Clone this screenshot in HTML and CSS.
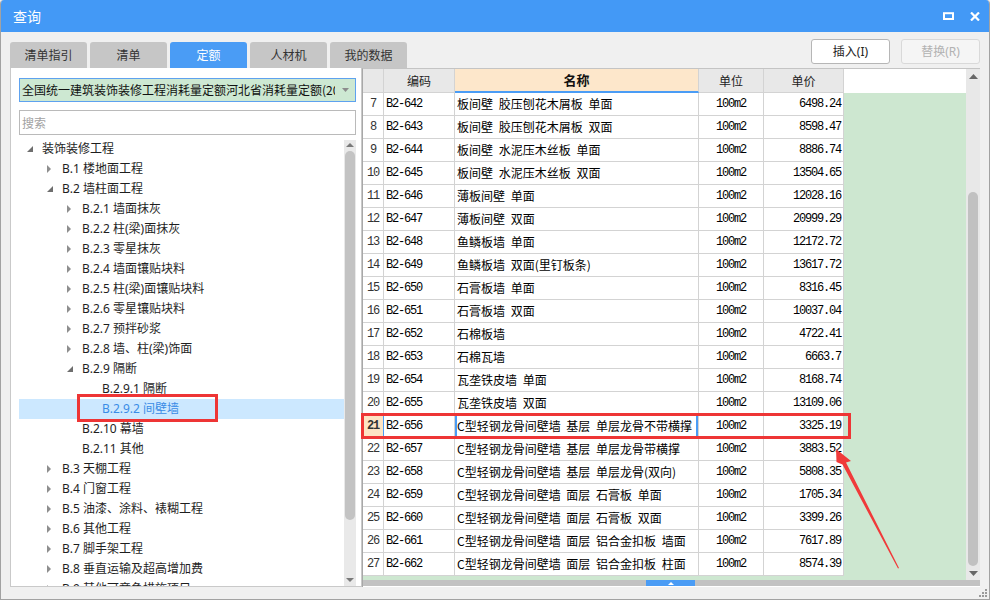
FILE: index.html
```html
<!DOCTYPE html>
<html lang="zh-CN">
<head>
<meta charset="utf-8">
<title>查询</title>
<link rel="stylesheet" href="styles.css">
</head>
<body>
<div class="window">
  <div class="titlebar">
    <span class="title">查询</span>
    <div class="winbtns">
      <svg width="11" height="8" viewBox="0 0 11 8"><rect x="1" y="1.2" width="9" height="5.8" fill="none" stroke="#fff" stroke-width="2"/></svg>
      <svg width="10" height="9" viewBox="0 0 10 9"><path d="M1 0.5 L9 8.5 M9 0.5 L1 8.5" stroke="#fff" stroke-width="2.2"/></svg>
    </div>
  </div>

  <div class="toolbar">
    <div class="tabs">
      <div class="tab">清单指引</div>
      <div class="tab">清单</div>
      <div class="tab active">定额</div>
      <div class="tab">人材机</div>
      <div class="tab">我的数据</div>
    </div>
    <div class="actions">
      <button class="btn">插入(I)</button>
      <button class="btn disabled">替换(R)</button>
    </div>
  </div>

  <div class="main">
    <div class="left">
      <div class="combo">
        <span class="combo-text">全国统一建筑装饰装修工程消耗量定额河北省消耗量定额(2012)</span>
        <span class="combo-arrow"><svg width="7" height="4" viewBox="0 0 7 4"><polygon points="0,0 7,0 3.5,4" fill="#8c8c8c"/></svg></span>
      </div>
      <div class="search">搜索</div>
      <div class="treewrap">
        <div class="tree">
          <div class="node l0"><span class="tg"><svg width="8" height="8" viewBox="0 0 8 8"><polygon points="7,1 7,7 1,7" fill="#6e6e6e"/></svg></span>装饰装修工程</div>
          <div class="node l1"><span class="tg"><svg width="8" height="8" viewBox="0 0 8 8"><polygon points="1,0 5,4 1,8" fill="#8e8e8e"/></svg></span>B.1 楼地面工程</div>
          <div class="node l1"><span class="tg"><svg width="8" height="8" viewBox="0 0 8 8"><polygon points="7,1 7,7 1,7" fill="#6e6e6e"/></svg></span>B.2 墙柱面工程</div>
          <div class="node l2"><span class="tg"><svg width="8" height="8" viewBox="0 0 8 8"><polygon points="1,0 5,4 1,8" fill="#8e8e8e"/></svg></span>B.2.1 墙面抹灰</div>
          <div class="node l2"><span class="tg"><svg width="8" height="8" viewBox="0 0 8 8"><polygon points="1,0 5,4 1,8" fill="#8e8e8e"/></svg></span>B.2.2 柱(梁)面抹灰</div>
          <div class="node l2"><span class="tg"><svg width="8" height="8" viewBox="0 0 8 8"><polygon points="1,0 5,4 1,8" fill="#8e8e8e"/></svg></span>B.2.3 零星抹灰</div>
          <div class="node l2"><span class="tg"><svg width="8" height="8" viewBox="0 0 8 8"><polygon points="1,0 5,4 1,8" fill="#8e8e8e"/></svg></span>B.2.4 墙面镶贴块料</div>
          <div class="node l2"><span class="tg"><svg width="8" height="8" viewBox="0 0 8 8"><polygon points="1,0 5,4 1,8" fill="#8e8e8e"/></svg></span>B.2.5 柱(梁)面镶贴块料</div>
          <div class="node l2"><span class="tg"><svg width="8" height="8" viewBox="0 0 8 8"><polygon points="1,0 5,4 1,8" fill="#8e8e8e"/></svg></span>B.2.6 零星镶贴块料</div>
          <div class="node l2"><span class="tg"><svg width="8" height="8" viewBox="0 0 8 8"><polygon points="1,0 5,4 1,8" fill="#8e8e8e"/></svg></span>B.2.7 预拌砂浆</div>
          <div class="node l2"><span class="tg"><svg width="8" height="8" viewBox="0 0 8 8"><polygon points="1,0 5,4 1,8" fill="#8e8e8e"/></svg></span>B.2.8 墙、柱(梁)饰面</div>
          <div class="node l2"><span class="tg"><svg width="8" height="8" viewBox="0 0 8 8"><polygon points="7,1 7,7 1,7" fill="#6e6e6e"/></svg></span>B.2.9 隔断</div>
          <div class="node l3"><span class="tg"></span>B.2.9.1 隔断</div>
          <div class="node l3 sel"><span class="tg"></span>B.2.9.2 间壁墙</div>
          <div class="node l2"><span class="tg"></span>B.2.10 幕墙</div>
          <div class="node l2"><span class="tg"></span>B.2.11 其他</div>
          <div class="node l1"><span class="tg"><svg width="8" height="8" viewBox="0 0 8 8"><polygon points="1,0 5,4 1,8" fill="#8e8e8e"/></svg></span>B.3 天棚工程</div>
          <div class="node l1"><span class="tg"><svg width="8" height="8" viewBox="0 0 8 8"><polygon points="1,0 5,4 1,8" fill="#8e8e8e"/></svg></span>B.4 门窗工程</div>
          <div class="node l1"><span class="tg"><svg width="8" height="8" viewBox="0 0 8 8"><polygon points="1,0 5,4 1,8" fill="#8e8e8e"/></svg></span>B.5 油漆、涂料、裱糊工程</div>
          <div class="node l1"><span class="tg"><svg width="8" height="8" viewBox="0 0 8 8"><polygon points="1,0 5,4 1,8" fill="#8e8e8e"/></svg></span>B.6 其他工程</div>
          <div class="node l1"><span class="tg"><svg width="8" height="8" viewBox="0 0 8 8"><polygon points="1,0 5,4 1,8" fill="#8e8e8e"/></svg></span>B.7 脚手架工程</div>
          <div class="node l1"><span class="tg"><svg width="8" height="8" viewBox="0 0 8 8"><polygon points="1,0 5,4 1,8" fill="#8e8e8e"/></svg></span>B.8 垂直运输及超高增加费</div>
          <div class="node l1"><span class="tg"><svg width="8" height="8" viewBox="0 0 8 8"><polygon points="1,0 5,4 1,8" fill="#8e8e8e"/></svg></span>B.9 其他可竞争措施项目</div>
        </div>
        <div class="lscroll">
          <div class="sarrow up"><svg width="8" height="4" viewBox="0 0 8 4"><polygon points="0,4 8,4 4,0" fill="#7a7a7a"/></svg></div>
          <div class="lthumb"></div>
          <div class="sfill"></div>
          <div class="sarrow down"><svg width="8" height="4" viewBox="0 0 8 4"><polygon points="0,0 8,0 4,4" fill="#7a7a7a"/></svg></div>
        </div>
      </div>
    </div>

    <div class="right">
      <div class="gridwrap">
        <div class="tablearea">
          <div class="thead">
            <div class="row hdr">
              <div class="c num"></div>
              <div class="c">编码</div>
              <div class="c nameh">名称</div>
              <div class="c">单位</div>
              <div class="c">单价</div>
            </div>
          </div>
          <div class="tbody">
            <div class="row"><div class="c num">7</div><div class="c code">B2-642</div><div class="c name">板间壁 胶压刨花木屑板 单面</div><div class="c unit">100m2</div><div class="c price">6498.24</div></div>
            <div class="row"><div class="c num">8</div><div class="c code">B2-643</div><div class="c name">板间壁 胶压刨花木屑板 双面</div><div class="c unit">100m2</div><div class="c price">8598.47</div></div>
            <div class="row"><div class="c num">9</div><div class="c code">B2-644</div><div class="c name">板间壁 水泥压木丝板 单面</div><div class="c unit">100m2</div><div class="c price">8886.74</div></div>
            <div class="row"><div class="c num">10</div><div class="c code">B2-645</div><div class="c name">板间壁 水泥压木丝板 双面</div><div class="c unit">100m2</div><div class="c price">13504.65</div></div>
            <div class="row"><div class="c num">11</div><div class="c code">B2-646</div><div class="c name">薄板间壁 单面</div><div class="c unit">100m2</div><div class="c price">12028.16</div></div>
            <div class="row"><div class="c num">12</div><div class="c code">B2-647</div><div class="c name">薄板间壁 双面</div><div class="c unit">100m2</div><div class="c price">20999.29</div></div>
            <div class="row"><div class="c num">13</div><div class="c code">B2-648</div><div class="c name">鱼鳞板墙 单面</div><div class="c unit">100m2</div><div class="c price">12172.72</div></div>
            <div class="row"><div class="c num">14</div><div class="c code">B2-649</div><div class="c name">鱼鳞板墙 双面(里钉板条)</div><div class="c unit">100m2</div><div class="c price">13617.72</div></div>
            <div class="row"><div class="c num">15</div><div class="c code">B2-650</div><div class="c name">石膏板墙 单面</div><div class="c unit">100m2</div><div class="c price">8316.45</div></div>
            <div class="row"><div class="c num">16</div><div class="c code">B2-651</div><div class="c name">石膏板墙 双面</div><div class="c unit">100m2</div><div class="c price">10037.04</div></div>
            <div class="row"><div class="c num">17</div><div class="c code">B2-652</div><div class="c name">石棉板墙</div><div class="c unit">100m2</div><div class="c price">4722.41</div></div>
            <div class="row"><div class="c num">18</div><div class="c code">B2-653</div><div class="c name">石棉瓦墙</div><div class="c unit">100m2</div><div class="c price">6663.7</div></div>
            <div class="row"><div class="c num">19</div><div class="c code">B2-654</div><div class="c name">瓦垄铁皮墙 单面</div><div class="c unit">100m2</div><div class="c price">8168.74</div></div>
            <div class="row"><div class="c num">20</div><div class="c code">B2-655</div><div class="c name">瓦垄铁皮墙 双面</div><div class="c unit">100m2</div><div class="c price">13109.06</div></div>
            <div class="row cur"><div class="c num">21</div><div class="c code">B2-656</div><div class="c name">C型轻钢龙骨间壁墙 基层 单层龙骨不带横撑</div><div class="c unit">100m2</div><div class="c price">3325.19</div></div>
            <div class="row"><div class="c num">22</div><div class="c code">B2-657</div><div class="c name">C型轻钢龙骨间壁墙 基层 单层龙骨带横撑</div><div class="c unit">100m2</div><div class="c price">3883.52</div></div>
            <div class="row"><div class="c num">23</div><div class="c code">B2-658</div><div class="c name">C型轻钢龙骨间壁墙 基层 单层龙骨(双向)</div><div class="c unit">100m2</div><div class="c price">5808.35</div></div>
            <div class="row"><div class="c num">24</div><div class="c code">B2-659</div><div class="c name">C型轻钢龙骨间壁墙 面层 石膏板 单面</div><div class="c unit">100m2</div><div class="c price">1705.34</div></div>
            <div class="row"><div class="c num">25</div><div class="c code">B2-660</div><div class="c name">C型轻钢龙骨间壁墙 面层 石膏板 双面</div><div class="c unit">100m2</div><div class="c price">3399.26</div></div>
            <div class="row"><div class="c num">26</div><div class="c code">B2-661</div><div class="c name">C型轻钢龙骨间壁墙 面层 铝合金扣板 墙面</div><div class="c unit">100m2</div><div class="c price">7617.89</div></div>
            <div class="row"><div class="c num">27</div><div class="c code">B2-662</div><div class="c name">C型轻钢龙骨间壁墙 面层 铝合金扣板 柱面</div><div class="c unit">100m2</div><div class="c price">8574.39</div></div>
          </div>
        </div>
        <div class="vscroll">
          <div class="varrow"><svg width="9" height="5" viewBox="0 0 9 5"><polygon points="0,5 9,5 4.5,0" fill="#666"/></svg></div>
          <div class="vtrack"><div class="vthumb"></div></div>
          <div class="varrow"><svg width="9" height="5" viewBox="0 0 9 5"><polygon points="0,0 9,0 4.5,5" fill="#666"/></svg></div>
        </div>
      </div>
      <div class="hscroll">
        <div class="hthumb"><svg width="6" height="3" viewBox="0 0 6 3"><polygon points="0,3 6,3 3,0" fill="#fff"/></svg></div>
      </div>
    </div>
  </div>

  <div class="foot">
    <svg width="10" height="10" viewBox="0 0 10 10" class="grip">
      <rect x="7" y="1" width="2" height="2" fill="#9a9a9a"/>
      <rect x="4" y="4" width="2" height="2" fill="#9a9a9a"/>
      <rect x="7" y="4" width="2" height="2" fill="#9a9a9a"/>
      <rect x="1" y="7" width="2" height="2" fill="#9a9a9a"/>
      <rect x="4" y="7" width="2" height="2" fill="#9a9a9a"/>
      <rect x="7" y="7" width="2" height="2" fill="#9a9a9a"/>
    </svg>
  </div>
</div>

<div class="mark mark-tree"></div>
<div class="mark mark-row"></div>
<svg class="arrow" width="990" height="600" viewBox="0 0 990 600">
  <polygon points="836,449 851,461 846,462.5 899,568 898,568.5 842.5,464.5 836.5,462" fill="#f03a3a"/>
</svg>
</body>
</html>
```

FILE: styles.css
```css
* { box-sizing: border-box; margin: 0; padding: 0; }
html, body { width: 990px; height: 600px; overflow: hidden; }
body {
  position: relative;
  font-family: "Noto Sans", "Noto Sans CJK SC", sans-serif;
  font-size: 12px;
  color: #222;
  background: #f0f0f0;
}

.window {
  width: 990px;
  height: 600px;
  background: #f0f0f0;
  border: 1px solid #a2a2a2;
  border-top: none;
  border-radius: 4px 4px 0 0;
  overflow: hidden;
  display: flex;
  flex-direction: column;
}

/* title bar */
.titlebar {
  height: 32px;
  flex: none;
  background: #4399f6;
  display: flex;
  align-items: center;
  justify-content: space-between;
  padding: 0 9px 0 12px;
  color: #fff;
}
.title { font-family: "Noto Sans CJK SC", sans-serif; font-size: 14px; line-height: 20px; }
.winbtns { display: flex; align-items: center; gap: 16px; }

/* toolbar with tabs */
.toolbar {
  height: 36px;
  flex: none;
  display: flex;
  justify-content: space-between;
  padding: 0 9px;
}
.tabs { display: flex; gap: 3px; align-self: flex-end; }
.tab {
  width: 77px;
  height: 26px;
  line-height: 26px;
  text-align: center;
  background: #c6c6c6;
  color: #333;
  border-radius: 3px 3px 0 0;
  font-family: "Noto Sans CJK SC", sans-serif;
  font-size: 12px;
}
.tab.active { background: #4a9cf5; color: #fff; }

.actions { display: flex; gap: 11px; padding-top: 7px; }
.btn {
  width: 79px;
  height: 25px;
  border: 1px solid #b6b6b6;
  border-radius: 3px;
  background: #fff;
  color: #222;
  font-family: "Noto Sans", "Noto Sans CJK SC", sans-serif;
  font-size: 12px;
  line-height: 23px;
}
.btn.disabled { border-color: #d9d9d9; background: #f5f5f5; color: #b2b2b2; }

/* main */
.main { height: 519px; flex: none; display: flex; padding: 0 9px; }

.left {
  width: 352px;
  flex: none;
  background: #fff;
  border: 1px solid #c9c9c9;
  border-top: none;
  padding: 10px 5px 0 8px;
  display: flex;
  flex-direction: column;
}
.combo {
  height: 24px;
  flex: none;
  border: 1px solid #5ea2ef;
  background: #cde8d2;
  display: flex;
  align-items: center;
  padding-left: 2px;
}
.combo-text {
  flex: 1;
  overflow: hidden;
  white-space: nowrap;
  font-family: "Noto Sans CJK SC", sans-serif;
  font-size: 12px;
  line-height: 22px;
  color: #111;
}
.combo-arrow { width: 20px; flex: none; display: flex; justify-content: center; align-items: center; }

.search {
  height: 25px;
  flex: none;
  margin-top: 8px;
  border: 1px solid #bababa;
  padding-left: 2px;
  line-height: 23px;
  color: #a2a2a2;
  font-family: "Noto Sans CJK SC", sans-serif;
}

.treewrap { flex: 1; min-height: 0; margin-top: 4px; display: flex; }
.tree { flex: 1; overflow: hidden; }
.node {
  height: 20px;
  display: flex;
  align-items: center;
  white-space: nowrap;
  line-height: 20px;
  color: #1e1e1e;
}
.node.l0 { padding-left: 6px; }
.node.l1 { padding-left: 26px; }
.node.l2 { padding-left: 46px; }
.node.l3 { padding-left: 66px; }
.node.sel { background: #cce8ff; color: #3a8ce6; }
.tg { width: 17px; height: 8px; flex: none; display: flex; padding-left: 1px; }

.lscroll {
  width: 12px;
  flex: none;
  margin-top: 1px;
  background: #e9e9e9;
  display: flex;
  flex-direction: column;
  align-items: center;
}
.sarrow { flex: none; display: flex; align-items: center; justify-content: center; }
.sarrow.up { height: 10px; }
.sarrow.down { height: 12px; }
.lthumb { width: 10px; height: 369px; margin-top: 1px; background: #c3c3c3; border-radius: 5px; flex: none; }
.sfill { flex: 1; }

/* right grid */
.right {
  width: 618px;
  flex: none;
  border-top: 1px solid #c4c4c4;
  border-left: 1px solid #a8a8a8;
  background: #fff;
  display: flex;
  flex-direction: column;
}
.gridwrap { height: 511px; flex: none; display: flex; }
.tablearea { flex: 1; display: flex; flex-direction: column; }
.thead { height: 24px; flex: none; background: #fff; }
.tbody { flex: 1; background: #cde7d0; }

.row {
  display: grid;
  grid-template-columns: 21px 71px 244px 65px 80px;
  width: 481px;
  height: 23px;
}
.row.hdr { height: 24px; }
.c {
  border-right: 1px solid #d3d3d3;
  border-bottom: 1px solid #d3d3d3;
  background: #fff;
  overflow: hidden;
  white-space: nowrap;
  line-height: 22px;
  color: #000;
}
.hdr .c {
  background: #e8e8e8;
  text-align: center;
  line-height: 23px;
  font-family: "Noto Sans CJK SC", sans-serif;
  font-size: 12px;
  color: #222;
}
.hdr .c.nameh {
  background: #fde7cb;
  font-weight: bold;
  font-size: 13px;
  border-bottom: 2px solid #4a9cf5;
  line-height: 22px;
  color: #111;
}
.c.num {
  text-align: center;
  font-family: "Liberation Mono", monospace;
  font-size: 12px;
  letter-spacing: -1.2px;
  color: #333;
}
.c.code {
  padding-left: 2px;
  font-family: "Liberation Mono", monospace;
  font-size: 12px;
  letter-spacing: -1.2px;
}
.c.name {
  padding-left: 2px;
  font-family: "Noto Sans CJK SC", sans-serif;
  font-size: 12px;
  word-spacing: 3px;
}
.c.unit {
  text-align: center;
  font-family: "Liberation Mono", monospace;
  font-size: 12px;
  letter-spacing: -1.2px;
}
.c.price {
  text-align: right;
  padding-right: 2px;
  font-family: "Liberation Mono", monospace;
  font-size: 12px;
  letter-spacing: -1.2px;
}
.row.cur .c.num { background: #fde3c4; font-weight: bold; border-right: 1px solid #4a9cf5; }
.row.cur .c.name { box-shadow: inset 2px 0 #4a9cf5, inset -2px 0 #4a9cf5; }

.vscroll {
  width: 14px;
  flex: none;
  background: #e8e8e8;
  display: flex;
  flex-direction: column;
  align-items: center;
}
.varrow { height: 14px; flex: none; display: flex; align-items: center; justify-content: center; }
.vtrack { flex: 1; width: 10px; display: flex; flex-direction: column; justify-content: flex-end; }
.vthumb { height: 374px; background: #c1c1c1; border-radius: 5px; }

.hscroll { height: 6px; flex: none; margin-top: 0; background: #c2c2c2; }
.hthumb {
  width: 49px;
  height: 6px;
  margin-left: 283px;
  background: #4a9cf5;
  display: flex;
  align-items: center;
  justify-content: center;
}

.foot { flex: 1; display: flex; justify-content: flex-end; align-items: flex-end; padding: 0 1px 1px 0; }

/* annotation overlays */
.mark { position: absolute; border: 3px solid #ee3535; pointer-events: none; }
.mark-tree { left: 77px; top: 394px; width: 141px; height: 28px; }
.mark-row { left: 361px; top: 413px; width: 490px; height: 26px; }
.arrow { position: absolute; left: 0; top: 0; pointer-events: none; }
```
